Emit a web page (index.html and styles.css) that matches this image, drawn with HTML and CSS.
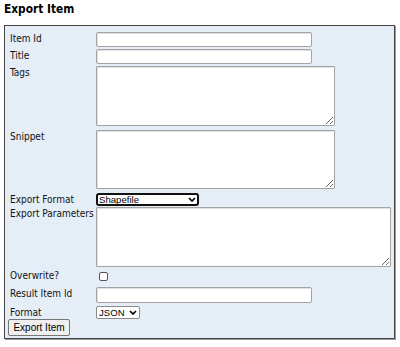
FILE: index.html
```html
<!DOCTYPE html>
<html lang="en">
<head>
  <meta charset="UTF-8" />
  <title>Export Item</title>
  <link rel="stylesheet" href="styles.css">
</head>
<body>
  <h2>Export Item</h2>

  <!-- export form -->
  <form class="form-box" onsubmit="return false">
    <label class="lbl">Item Id</label>
    <div class="cell"><input type="text" class="txt"></div>

    <label class="lbl">Title</label>
    <div class="cell"><input type="text" class="txt"></div>

    <label class="lbl">Tags</label>
    <div class="cell gap-4"><textarea class="area"></textarea></div>

    <label class="lbl">Snippet</label>
    <div class="cell gap-4"><textarea class="area area-short"></textarea></div>

    <label class="lbl">Export Format</label>
    <div class="cell gap-1">
      <span class="sel-wrap">
        <select class="sel sel-focus sel-wide">
          <option>Shapefile</option>
          <option>CSV</option>
          <option>File Geodatabase</option>
          <option>Feature Collection</option>
          <option>GeoJson</option>
          <option>Scene Package</option>
          <option>KML</option>
        </select>
        <svg class="chev" width="8" height="5" viewBox="0 0 8 5"><polyline points="1,1 4,4 7,1" fill="none" stroke="#000" stroke-width="1.7"/></svg>
      </span>
    </div>

    <label class="lbl">Export Parameters</label>
    <div class="cell"><textarea class="area area-wide"></textarea></div>

    <label class="lbl">Overwrite?</label>
    <div class="cell"><input type="checkbox" class="chk"></div>

    <label class="lbl">Result Item Id</label>
    <div class="cell gap-3"><input type="text" class="txt txt-tall"></div>

    <label class="lbl">Format</label>
    <div class="cell gap-0">
      <span class="sel-wrap">
        <select class="sel sel-narrow">
          <option>JSON</option>
          <option>HTML</option>
        </select>
        <svg class="chev" width="8" height="5" viewBox="0 0 8 5"><polyline points="1,1 4,4 7,1" fill="none" stroke="#000" stroke-width="1.7"/></svg>
      </span>
    </div>

    <div class="btn-row"><button type="submit" class="btn">Export Item</button></div>
  </form>
</body>
</html>
```

FILE: styles.css
```css
body {
  margin: 0;
  padding: 2px 4px;
  background: #fff;
  color: #000;
  font-family: "DejaVu Sans Condensed", "DejaVu Sans", sans-serif;
}
h2 {
  font-size: 11.8px;
  line-height: 14px;
  font-weight: bold;
  margin: 0 0 9px 0;
}
.form-box {
  box-sizing: border-box;
  width: 391px;
  height: 314px;
  border: 1px solid #444;
  box-shadow: 1px 1px 0 #9a9a9a;
  background: #e5eef7;
  padding: 6px 3px 2px 3px;
  display: grid;
  grid-template-columns: 88px 1fr;
  align-items: start;
  align-content: start;
}
.lbl {
  font-size: 10px;
  line-height: 12px;
  padding: 1px 0 0 2px;
  white-space: nowrap;
  color: #111;
}
.cell {
  padding-bottom: 2px;
  line-height: 0;
}
.gap-4 { padding-bottom: 4px; }
.gap-3 { padding-bottom: 3px; }
.gap-1 { padding-bottom: 1px; }
.gap-0 { padding-bottom: 0; }

.txt {
  box-sizing: border-box;
  width: 216px;
  height: 15px;
  margin: 0;
  padding: 0 2px;
  border: 1px solid #a3a3a3;
  border-radius: 2px;
  box-shadow: inset 1px 1px 0 #e2e2e2;
  background: #fff;
  font: 10px "Liberation Sans", Arial, sans-serif;
}
.txt-tall { height: 16px; }
.area {
  box-sizing: border-box;
  display: block;
  width: 239px;
  height: 60px;
  margin: 0;
  border: 1px solid #a3a3a3;
  border-radius: 1px;
  box-shadow: inset 1px 1px 0 #e2e2e2;
  background: #fff;
  font: 10px "Liberation Sans", Arial, sans-serif;
}
.area-short { height: 59px; }
.area-wide { width: 295px; }

.sel-wrap {
  position: relative;
  display: inline-block;
  line-height: 0;
}
.sel {
  -webkit-appearance: none;
  appearance: none;
  box-sizing: border-box;
  height: 13px;
  margin: 0;
  padding: 0 0 0 2px;
  border: 1px solid #8a8a8a;
  border-radius: 2px;
  background: #fff;
  color: #000;
  font: 9.6px/10px "Liberation Sans", Arial, sans-serif;
}
.sel-focus {
  border: 2px solid #111;
  border-radius: 3px;
  padding-left: 1px;
  line-height: 9px;
}
.sel-wide { width: 103px; }
.sel-narrow { width: 44px; }
.chev {
  position: absolute;
  right: 3px;
  top: 4px;
  pointer-events: none;
}

.chk {
  -webkit-appearance: none;
  appearance: none;
  box-sizing: border-box;
  width: 9px;
  height: 9px;
  margin: 3px 0 4px 3px;
  border: 1px solid #555;
  border-radius: 2px;
  background: #fff;
}

.btn-row {
  grid-column: 1 / span 2;
  line-height: 0;
}
.btn {
  box-sizing: border-box;
  width: 62px;
  height: 17px;
  margin: 0;
  padding: 0;
  border: 1px solid #767676;
  border-radius: 2px;
  background: #efefef;
  color: #000;
  font: 10px "Liberation Sans", Arial, sans-serif;
}
```
